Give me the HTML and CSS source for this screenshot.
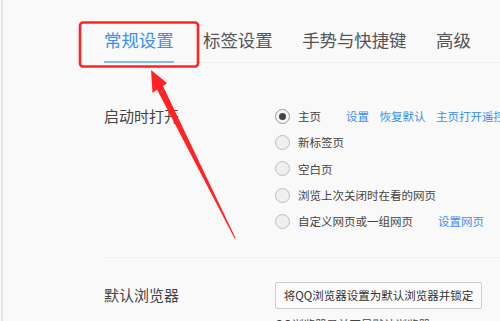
FILE: index.html
```html
<!DOCTYPE html>
<html lang="zh-CN">
<head>
    <meta charset="UTF-8">
    <meta name="viewport" content="width=device-width, initial-scale=1.0">
    <title>设置</title>
    <link rel="stylesheet" href="styles.css">
</head>
<body>
    <div class="page">
        <div class="tabs">
            <div class="tab active">常规设置</div>
            <div class="tab">标签设置</div>
            <div class="tab">手势与快捷键</div>
            <div class="tab">高级</div>
        </div>

        <div class="section startup">
            <div class="label">启动时打开</div>
            <div class="options">
                <div class="option">
                    <span class="radio checked"></span>
                    <span>主页</span>
                    <span class="links"><a>设置</a><a>恢复默认</a><a>主页打开遥控</a></span>
                </div>
                <div class="option"><span class="radio"></span><span>新标签页</span></div>
                <div class="option"><span class="radio"></span><span>空白页</span></div>
                <div class="option"><span class="radio"></span><span>浏览上次关闭时在看的网页</span></div>
                <div class="option">
                    <span class="radio"></span>
                    <span>自定义网页或一组网页</span>
                    <span class="links"><a>设置网页</a></span>
                </div>
            </div>
        </div>

        <div class="divider"></div>

        <div class="section browser">
            <div class="label">默认浏览器</div>
            <div class="options">
                <button>将QQ浏览器设置为默认浏览器并锁定</button>
                <div class="note">QQ浏览器目前不是默认浏览器</div>
            </div>
        </div>
    </div>

    <!-- annotation drawn over the screenshot -->
    <svg class="mark" width="500" height="321" viewBox="0 0 500 321">
        <rect x="80" y="22.5" width="118" height="44" rx="3" fill="none" stroke="#ff2323" stroke-width="2.6"/>
        <polygon fill="#ff2323" points="151,70 167,83 163,86 235.5,238 234.6,238.5 157,89.5 152.5,93"/>
    </svg>
</body>
</html>
```

FILE: styles.css
```css
body { margin: 0; background: #f9f9f9; font-family: "Noto Sans CJK SC", "Noto Sans", sans-serif; color: #444; overflow: hidden; }
.page { height: 321px; margin-left: 1px; border-left: 2px solid #e6e6e6; padding-left: 101px; overflow: hidden; white-space: nowrap; }

.tabs { display: flex; gap: 29.5px; border-bottom: 1px solid #eeeeee; }
.tab { font-size: 17.4px; line-height: 24px; padding: 28px 0 9px; border-bottom: 2px solid transparent; margin-bottom: -1px; color: #555; }
.tab.active { color: #3d8ef2; border-bottom-color: #82bbf6; }

.section { display: grid; grid-template-columns: 171px 1fr; }
.label { font-size: 15px; color: #444; }

.startup { margin-top: 40px; }
.startup .label { line-height: 26.3px; }
.option { display: flex; align-items: center; height: 26.3px; font-size: 11.5px; }
.radio { width: 13px; height: 13px; border: 1px solid #bdbdbd; border-radius: 50%; background: #efefef; margin-right: 8px; display: flex; align-items: center; justify-content: center; box-sizing: content-box; }
.radio.checked { border-color: #999; background: #f7f7f7; }
.radio.checked::after { content: ""; width: 7px; height: 7px; border-radius: 50%; background: #444; }
.links { display: flex; gap: 10.5px; margin-left: 25px; }
.links a { color: #3d8ef2; }

.divider { height: 1px; background: #efefef; margin-top: 23px; }

.browser { margin-top: 23px; }
.browser .label { line-height: 27px; }
button { width: 207px; height: 27px; padding: 0; border: 1px solid #cdcdcd; border-radius: 2px; background: #fcfcfc; font-family: inherit; font-size: 11.5px; color: #333; }
.note { font-size: 11.5px; line-height: 14px; margin-top: 8px; color: #444; }

.mark { position: absolute; left: 0; top: 0; pointer-events: none; }
```
